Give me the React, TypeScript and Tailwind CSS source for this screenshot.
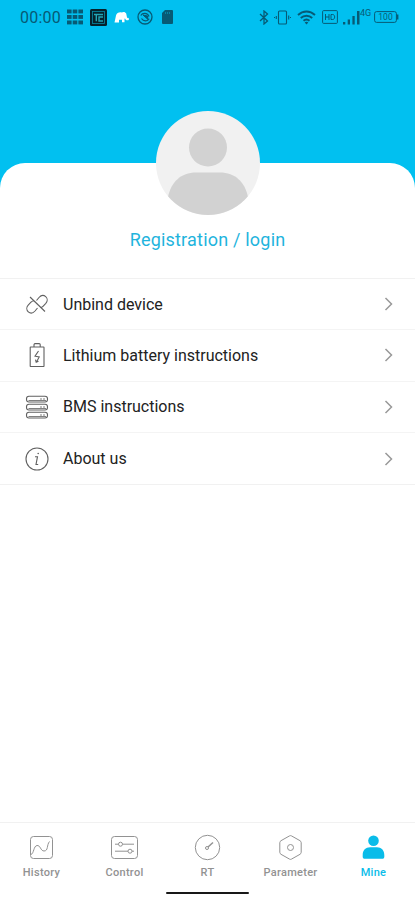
import type { ReactNode } from "react";

const StatusBar = () => {
  return (
    <div className="flex h-[34px] items-center pl-5 pr-4 text-[#075a75]">
      <span className="w-[47px] whitespace-nowrap pt-px text-[16px] leading-none tracking-[0.2px]">00:00</span>
      <svg className="h-4 w-4" viewBox="0 0 16 16" fill="currentColor">
        {[0.5, 6, 11.5].map((y) =>
          [0, 5.7, 11.4].map((x) => <rect key={`${x}-${y}`} x={x} y={y} width="4.6" height="3.9" />)
        )}
      </svg>
      <svg className="ml-[7px] h-[17px] w-[17px]" viewBox="0 0 17 17" fill="none">
        <rect width="17" height="17" rx="1.5" fill="#05222c" />
        <rect x="2.5" y="2.5" width="12" height="12" stroke="#078aa5" strokeWidth="0.8" />
        <path d="M4 5.5h9M6.3 5.5v6.8M13 8H9v4h4" stroke="#23a5b4" strokeWidth="1.4" />
      </svg>
      <svg className="ml-[7px] h-[14px] w-[15px]" viewBox="0 0 15 14" fill="#fff">
        <path d="M0.5 12.5 2 5.5C2.7 2.8 5 2 7.7 2.4 9 1.5 11.5 1.7 12.2 3.5l.8 4 1 .7.8-.5v2.2c-1.7 1-3.1.2-3.5-1.2l-.8-.2v3.8H8V9.7H5v2.8Z" />
      </svg>
      <svg className="ml-[8px] h-4 w-4" viewBox="0 0 16 16" fill="none" stroke="currentColor">
        <circle cx="8" cy="8" r="7" strokeWidth="1.3" />
        <path d="M3.8 6.5C5.5 3.500 10.500 3.500 12 7.500M12.200 9.700C10.500 12.700 6.500 12.500 4.500 9.500" strokeWidth="1.2" />
        <path d="M6 6 11 10.500 10.500 7Z" fill="currentColor" />
      </svg>
      <svg className="ml-[9px] h-[14px] w-[11px]" viewBox="0 0 11 14">
        <path d="M3 0h7a1 1 0 0 1 1 1v12a1 1 0 0 1-1 1H1a1 1 0 0 1-1-1V3Z" fill="currentColor" />
        <path d="M3.5 2v2M5.5 2v2M7.5 2v2" stroke="#0698bb" strokeWidth="0.7" />
      </svg>

      <svg className="ml-auto h-[15px] w-[10px]" viewBox="0 0 10 15" fill="none" stroke="currentColor" strokeWidth="1.3">
        <path d="M1 4 8.5 11 5 14V1l3.5 3L1 11" />
      </svg>
      <svg className="ml-[5px] h-[15px] w-[17px]" viewBox="0 0 17 15" fill="none" stroke="currentColor" strokeWidth="1.1">
        <rect x="4.5" y="1" width="8" height="13" rx="1" />
        <path d="M2.3 6v3M.5 7v1M14.700 5.500v4M16.500 7v1" />
      </svg>
      <svg className="ml-[6px] h-[15px] w-[19px]" viewBox="0 0 19 15" fill="none" stroke="currentColor" strokeWidth="1.9">
        <path d="M1 5C6 .3 13 .3 18 5M3.8 8C7 5 12 5 15.2 8M6.5 10.8c2-1.7 4-1.7 6 0" />
        <path d="m7.7 12.5 1.8 2 1.8-2c-1-1-2.6-1-3.6 0Z" fill="currentColor" stroke="none" />
      </svg>
      <svg className="ml-[6px] h-[14px] w-4" viewBox="0 0 16 14" fill="none" stroke="currentColor">
        <rect x=".6" y=".6" width="14.8" height="12.8" rx="1" />
        <path d="M3.5 4v6M7 4v6M3.5 7H7M9 4.5h1.7C13.3 4.5 13.3 9.5 10.7 9.5H9Z" />
      </svg>
      <svg className="ml-[5px] h-[15px] w-[17px]" viewBox="0 0 17 15" fill="currentColor">
        <path d="M0 12h2.3v2.5H0ZM4.7 9.5H7v5H4.7ZM9.4 6h2.3v8.5H9.4ZM14 1h2.5v13.5H14Z" />
      </svg>
      <span className="w-[11px] -translate-y-1 text-[9px] leading-none">4G</span>
      <svg className="ml-[3px] h-3 w-[25px]" viewBox="0 0 25 12" fill="none" stroke="currentColor">
        <rect x=".6" y=".6" width="21.8" height="10.8" rx="2" />
        <path d="M23.5 3.5v5" strokeWidth="1.8" />
        <text x="11.5" y="9" textAnchor="middle" fontSize="8.5" fill="currentColor" stroke="none">100</text>
      </svg>
    </div>
  );
};

const Avatar = () => {
  return (
    <svg className="-mt-[52px] h-[104px] w-[104px]" viewBox="0 0 104 104">
      <defs>
        <clipPath id="avatar">
          <circle cx="52" cy="52" r="52" />
        </clipPath>
      </defs>
      <g clipPath="url(#avatar)">
        <rect width="104" height="104" fill="#f1f1f1" />
        <circle cx="52" cy="36.5" r="19" fill="#d2d2d2" />
        <path d="M12 86C15 71 25 61.500 40 61.500h24c15 0 25 9.500 28 24.500v20H12Z" fill="#d2d2d2" />
      </g>
    </svg>
  );
};

const menuItems: { label: string; icon: ReactNode }[] = [
  {
    label: "Unbind device",
    icon: (
      <>
        <path d="M11.500 8.500 14 5.500c2-2.200 4.800-2.500 6.700-.8 2 1.800 1.900 4.700.1 6.700L18 14.300c-.8.800-1.600 1.200-2.500 1.200" />
        <path d="M12.500 16 10 19c-2 2.200-4.800 2.500-6.700.8-2-1.800-1.900-4.700-.1-6.700L6 10.200C7 9.200 8 8.800 9 8.800" />
        <path d="m5 5 15 14.500" />
      </>
    ),
  },
  {
    label: "Lithium battery instructions",
    icon: (
      <>
        <rect x="5.200" y="4" width="13.800" height="19.500" rx=".5" />
        <path d="M9 4V2Q9 .6 10 .6h4.200q1 0 1 1V4M13.500 8 10 13.200l4.200.8-2.700 5M10.500 16.700l.7 2.500 2.300-.9" />
      </>
    ),
  },
  {
    label: "BMS instructions",
    icon: (
      <>
        <rect x="1.500" y="1.200" width="21" height="5.800" rx="2.500" />
        <rect x="1.500" y="9.200" width="21" height="5.800" rx="2.500" />
        <rect x="1.500" y="17.200" width="21" height="5.800" rx="2.500" />
        <path d="M3.500 5.500H21M3.500 13.500H21M3.500 21.500H21M15 4h2m1 0h2M15 12h2m1 0h2M15 20h2m1 0h2" strokeWidth="0.8" />
      </>
    ),
  },
  {
    label: "About us",
    icon: (
      <>
        <circle cx="12" cy="12" r="11" />
        <path d="M10 9.700h2.500L11 17.500h2.200" />
        <circle cx="13.200" cy="6.500" r=".8" fill="currentColor" stroke="none" />
      </>
    ),
  },
];

const navItems: { label: string; active?: boolean; icon: ReactNode }[] = [
  {
    label: "History",
    icon: (
      <>
        <rect x="2.500" y="2.500" width="22" height="22" rx="3" />
        <path d="M3 20.500c3-1 2.500-8.500 6-9 3.500-.4 3.500 5.500 7 5.500 4.500 0 2.500-6 5.500-9.500" />
      </>
    ),
  },
  {
    label: "Control",
    icon: (
      <>
        <rect x="0.500" y="2.500" width="26" height="22" rx="3" />
        <path d="M4 10.200h3.500m4 0H23M4 17.200h13m4 0h2" />
        <circle cx="9.500" cy="10.200" r="2" />
        <circle cx="19" cy="17.200" r="2" />
      </>
    ),
  },
  {
    label: "RT",
    icon: (
      <>
        <circle cx="13.500" cy="13.500" r="12.200" />
        <path d="m14 13 5-4.500" strokeWidth="1.500" />
        <circle cx="13" cy="14" r="1.500" />
      </>
    ),
  },
  {
    label: "Parameter",
    icon: (
      <>
        <path d="M12.500 1.900q1-.6 2 0l8.500 4.800q1.200.7 1.200 2v9.600q0 1.300-1.200 2l-8.500 4.800q-1 .6-2 0L4 20.300q-1.200-.7-1.200-2V8.700q0-1.300 1.200-2Z" />
        <circle cx="13.500" cy="13.500" r="3" />
      </>
    ),
  },
  {
    label: "Mine",
    active: true,
    icon: (
      <g fill="currentColor" stroke="none">
        <circle cx="13.500" cy="6.800" r="5.300" />
        <path d="M2.700 23v-2c0-4.800 3-7.800 7.300-7.800h7c4.300 0 7.300 3 7.300 7.800v2q0 1.800-1.500 1.800H4.200q-1.500 0-1.500-1.800Z" />
      </g>
    ),
  },
];

const App = () => {
  return (
    <div className="flex h-[900px] w-[415px] flex-col overflow-hidden bg-[#01c0f0] font-['Roboto',sans-serif]">
      <StatusBar />

      <main className="mt-[129px] flex flex-1 flex-col rounded-t-[25px] bg-white">
        <div className="flex h-[115px] flex-col items-center">
          <Avatar />
          <button className="mt-3 whitespace-nowrap text-[18px] leading-[26px] tracking-[0.2px] text-[#1fb4dd]">
            Registration / login
          </button>
        </div>

        <ul className="border-y border-[#f1f1f1]">
          {menuItems.map((item) => (
            <li
              key={item.label}
              className="flex h-[51.3px] items-center border-b border-[#f4f4f4] pl-[25px] pr-[22px] last:border-b-0"
            >
              <svg className="h-6 w-6 text-[#606060]" viewBox="0 0 24 24" fill="none" stroke="currentColor" strokeWidth="1.1">
                {item.icon}
              </svg>
              <span className="ml-[14px] pt-px text-[16px] text-[#222]">{item.label}</span>
              <svg className="ml-auto h-[14px] w-[9px]" viewBox="0 0 9 14" fill="none" stroke="#999" strokeWidth="1.5">
                <path d="m1.500 1 6 6-6 6" />
              </svg>
            </li>
          ))}
        </ul>

        <nav className="mt-auto flex h-[78px] flex-col items-center border-t border-[#f1f1f1]">
          <div className="flex w-full pt-[11px]">
            {navItems.map((item) => (
              <div
                key={item.label}
                className={`flex flex-1 flex-col items-center ${item.active ? "text-[#09bce9]" : "text-[#929292]"}`}
              >
                <svg className="h-[27px] w-[27px]" viewBox="0 0 27 27" fill="none" stroke="currentColor">
                  {item.icon}
                </svg>
                <span className="mt-1 text-[11px] font-medium leading-4 tracking-[0.3px]">{item.label}</span>
              </div>
            ))}
          </div>
          <div className="mt-[11px] h-[2px] w-[83px] rounded-full bg-[#181818]" />
        </nav>
      </main>
    </div>
  );
};

export default App;
